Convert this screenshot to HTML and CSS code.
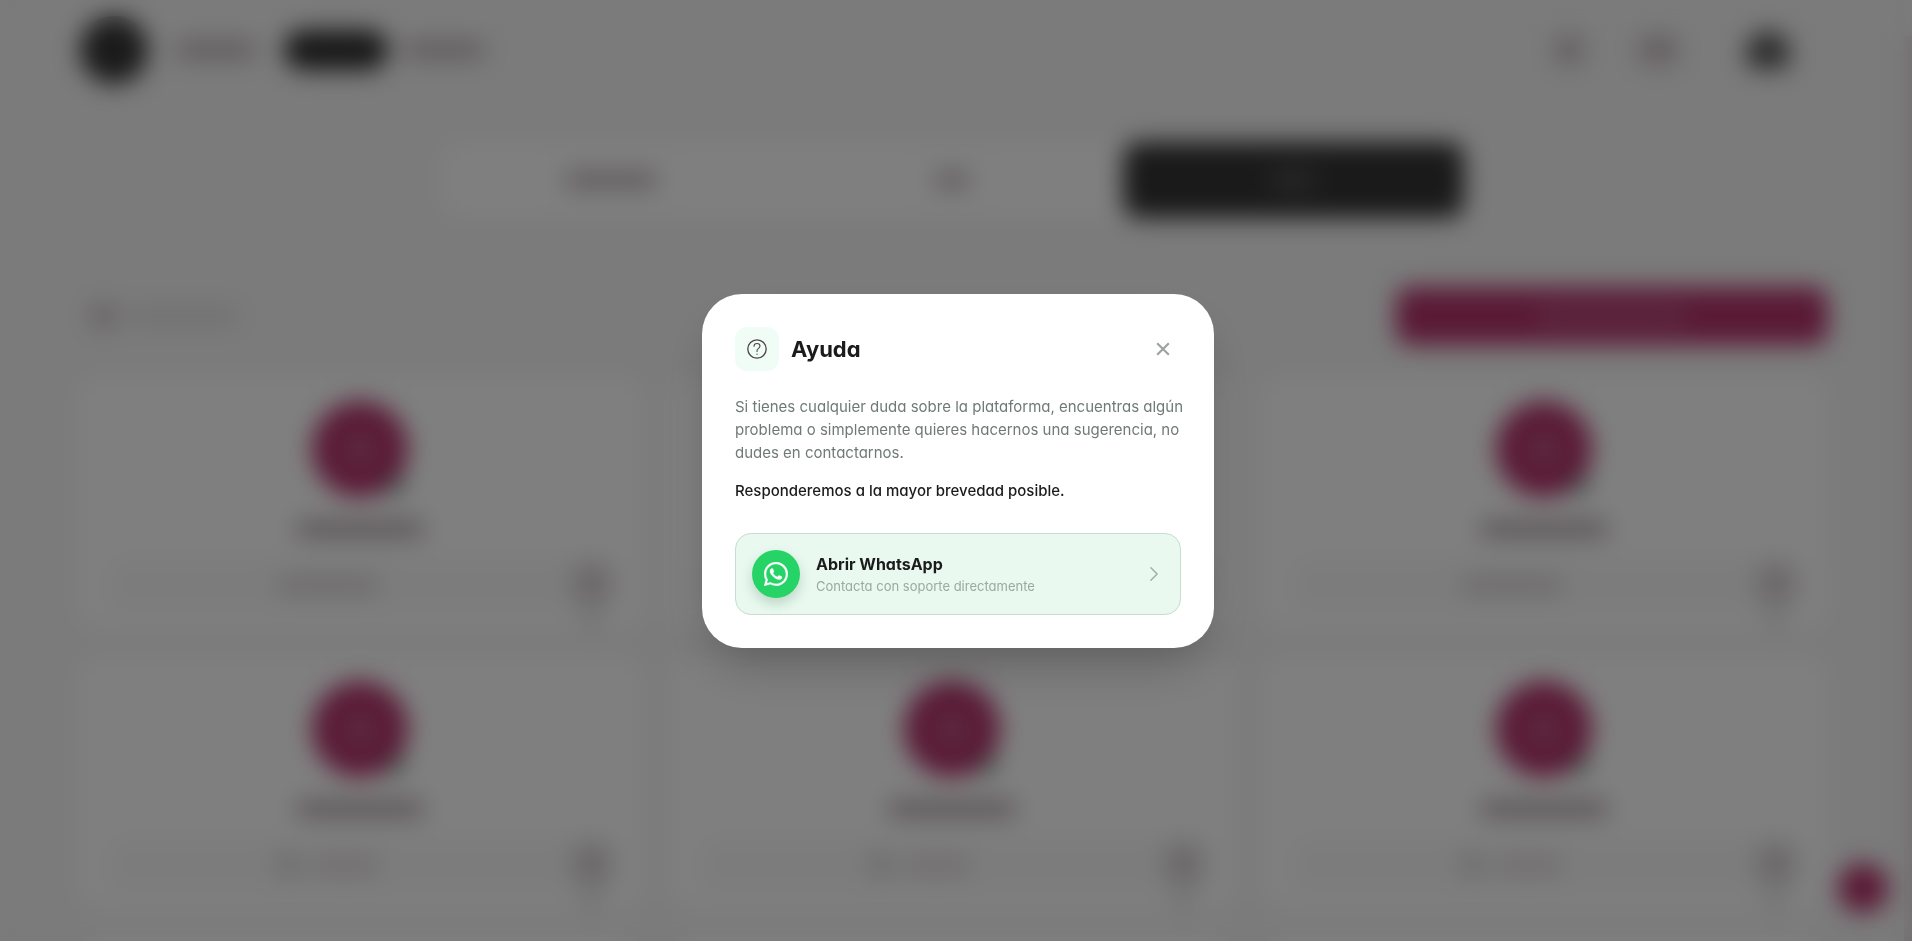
FILE: index.html
```html
<!DOCTYPE html>
<html lang="es">
  <head>
    <meta charset="UTF-8" />
    <meta name="viewport" content="width=device-width, initial-scale=1.0" />
    <title>Ayuda</title>
    <link rel="stylesheet" href="styles.css" />
  </head>
  <body>
    <!-- Page behind the dialog -->
    <div class="page" inert>
      <header class="topbar">
        <span class="logo"></span>
        <nav class="nav">
          <span class="bar nav-item"></span>
          <span class="nav-active"></span>
          <span class="bar nav-item"></span>
        </nav>
        <div class="tools">
          <span class="tool tool-small"></span>
          <span class="tool tool-wide"></span>
          <span class="user"></span>
        </div>
      </header>

      <main class="content">
        <div class="tabs">
          <div class="tab"><span class="bar tab-wide"></span></div>
          <div class="tab"><span class="bar tab-short"></span></div>
          <div class="tab tab-active"><span class="bar tab-label"></span></div>
        </div>

        <div class="actions">
          <div class="filter">
            <span class="filter-icon"></span>
            <span class="bar filter-label"></span>
          </div>
          <div class="add"><span class="bar add-label"></span></div>
        </div>

        <div class="cards">
          <div class="card">
            <span class="avatar"></span>
            <span class="bar name"></span>
            <div class="info">
              <span class="bar info-label"></span>
              <span class="pin"></span>
            </div>
          </div>
          <div class="card">
            <span class="avatar"></span>
            <span class="bar name"></span>
            <div class="info">
              <span class="bar info-label"></span>
              <span class="pin"></span>
            </div>
          </div>
          <div class="card">
            <span class="avatar"></span>
            <span class="bar name"></span>
            <div class="info">
              <span class="bar info-label"></span>
              <span class="pin"></span>
            </div>
          </div>
          <div class="card">
            <span class="avatar"></span>
            <span class="bar name"></span>
            <div class="info">
              <span class="dot"></span>
              <span class="bar info-short"></span>
              <span class="pin"></span>
            </div>
          </div>
          <div class="card">
            <span class="avatar"></span>
            <span class="bar name"></span>
            <div class="info">
              <span class="dot"></span>
              <span class="bar info-short"></span>
              <span class="pin"></span>
            </div>
          </div>
          <div class="card">
            <span class="avatar"></span>
            <span class="bar name"></span>
            <div class="info">
              <span class="dot"></span>
              <span class="bar info-short"></span>
              <span class="pin"></span>
            </div>
          </div>
          <div class="card"></div>
          <div class="card"></div>
          <div class="card"></div>
        </div>
      </main>
      <span class="scroll-track"></span>
      <span class="fab"></span>
    </div>

    <!-- Help dialog -->
    <div class="overlay">
      <div class="modal" role="dialog" aria-modal="true" aria-labelledby="help-title">
        <div class="modal-header">
          <span class="modal-icon">
            <svg width="24" height="24" viewBox="0 0 24 24" fill="none" stroke="currentColor" stroke-width="1.3" stroke-linecap="round" stroke-linejoin="round">
              <circle cx="12" cy="12" r="9.2" />
              <path d="M9 9.300C9 7.600 10.300 6.500 12 6.500s3 1.100 3 2.600c0 1.300-.8 1.900-1.700 2.500-.9.600-1.300 1.200-1.300 2.200v.6" stroke-width="1.100" />
              <path d="M12 17.100v.1" />
            </svg>
          </span>
          <h2 class="modal-title" id="help-title">Ayuda</h2>
          <button class="close" type="button" aria-label="Cerrar">
            <svg width="20" height="20" viewBox="0 0 24 24" fill="none" stroke="currentColor" stroke-width="2.600">
              <path d="M5 5l14 14M19 5L5 19" />
            </svg>
          </button>
        </div>

        <p class="text">
          Si tienes cualquier duda sobre la plataforma, encuentras algún
          problema o simplemente quieres hacernos una sugerencia, no dudes en
          contactarnos.
        </p>
        <p class="text text-strong">Responderemos a la mayor brevedad posible.</p>

        <a class="whatsapp" href="#">
          <span class="whatsapp-icon">
            <svg width="24" height="24" viewBox="0 0 16 16" fill="currentColor" stroke="currentColor" stroke-width="0.150">
              <path d="M13.601 2.326A7.850 7.850 0 0 0 7.994 0C3.627 0 .068 3.558.064 7.926c0 1.399.366 2.760 1.057 3.965L0 16l4.204-1.102a7.900 7.900 0 0 0 3.790.965h.004c4.368 0 7.926-3.558 7.930-7.930A7.900 7.900 0 0 0 13.600 2.326zM7.994 14.521a6.600 6.600 0 0 1-3.356-.920l-.240-.144-2.494.654.666-2.433-.156-.251a6.560 6.560 0 0 1-1.007-3.505c0-3.626 2.957-6.584 6.591-6.584a6.560 6.560 0 0 1 4.660 1.931 6.560 6.560 0 0 1 1.928 4.660c-.004 3.639-2.961 6.592-6.592 6.592m3.615-4.934c-.197-.099-1.170-.578-1.353-.646-.182-.065-.315-.099-.445.099-.133.197-.513.646-.627.775-.114.133-.232.148-.430.050-.197-.100-.836-.308-1.592-.985-.590-.525-.985-1.175-1.103-1.372-.114-.198-.011-.304.088-.403.087-.088.197-.232.296-.346.100-.114.133-.198.198-.330.065-.134.034-.248-.015-.347-.050-.099-.445-1.076-.612-1.470-.160-.389-.323-.335-.445-.340-.114-.007-.247-.007-.380-.007a.730.730 0 0 0-.529.247c-.182.198-.691.677-.691 1.654s.710 1.916.810 2.049c.098.133 1.394 2.132 3.383 2.992.470.205.840.326 1.129.418.475.152.904.129 1.246.080.380-.058 1.171-.480 1.338-.943.164-.464.164-.860.114-.992-.049-.133-.182-.198-.380-.297" />
            </svg>
          </span>
          <span class="whatsapp-body">
            <span class="whatsapp-title">Abrir WhatsApp</span>
            <span class="whatsapp-sub">Contacta con soporte directamente</span>
          </span>
          <svg class="chevron" width="20" height="20" viewBox="0 0 24 24" fill="none" stroke="currentColor" stroke-width="1.500" stroke-linecap="round" stroke-linejoin="round">
            <path d="M8.250 4.500l7.500 7.500-7.500 7.500" />
          </svg>
        </a>
      </div>
    </div>
  </body>
</html>
```
FILE: styles.css
```css
* {
  box-sizing: border-box;
}

body {
  margin: 0;
  font-family: Inter, "Open Sans", sans-serif;
  font-feature-settings: "cv11";
  color: #1b1b1b;
}

/* Page behind the dialog */
.page {
  position: relative;
  height: 100vh;
  overflow: hidden;
  padding: 0 84px 0 76px;
  background: #f6f6f6;
}

.bar {
  display: block;
  flex: none;
  height: 14px;
  border-radius: 7px;
  background: #b4a6aa;
}

.topbar {
  display: flex;
  align-items: center;
  height: 100px;
}

.logo {
  width: 68px;
  height: 68px;
  margin-left: 4px;
  border-radius: 50%;
  background: #363636;
}

.nav {
  display: flex;
  align-items: center;
  gap: 16px;
  margin-left: 28px;
}

.nav-item {
  width: 80px;
}

.nav-active {
  width: 104px;
  height: 40px;
  margin-left: 12px;
  border-radius: 20px;
  background: #303030;
}

.tools {
  display: flex;
  align-items: center;
  gap: 54px;
  margin-left: auto;
  padding-right: 38px;
}

.tool {
  height: 30px;
  border-radius: 12px;
  background: #cdc1c4;
}

.tool-small {
  width: 30px;
}

.tool-wide {
  width: 40px;
}

.user {
  width: 44px;
  height: 38px;
  margin-left: 14px;
  border-radius: 22px 22px 10px 10px;
  background: #5c5c5c;
}

.tabs {
  display: grid;
  grid-template-columns: repeat(3, 1fr);
  max-width: 1024px;
  height: 76px;
  margin: 42px auto 0;
  border-radius: 16px;
  background: #ffffff;
}

.tab {
  display: flex;
  align-items: center;
  justify-content: center;
}

.tab-active {
  border-radius: 16px;
  background: #343434;
}

.tab-wide {
  width: 92px;
}

.tab-short {
  width: 34px;
}

.tab-label {
  width: 48px;
  background: #5c5c5c;
}

.actions {
  display: flex;
  align-items: center;
  justify-content: space-between;
  margin: 69px 0 30px;
}

.filter {
  display: flex;
  align-items: center;
  gap: 12px;
  padding-left: 16px;
}

.filter-icon {
  width: 24px;
  height: 24px;
  border-radius: 8px;
  background: #cdc1c4;
}

.filter-label {
  width: 110px;
  background: #e2dcde;
}

.add {
  display: flex;
  align-items: center;
  justify-content: center;
  width: 432px;
  height: 58px;
  border-radius: 14px;
  background: #b4346c;
}

.add-label {
  width: 150px;
  background: #bf6088;
}

.cards {
  display: grid;
  grid-template-columns: repeat(3, 1fr);
  gap: 24px;
}

.card {
  display: flex;
  flex-direction: column;
  align-items: center;
  height: 256px;
  padding: 26px 32px 0;
  border-radius: 24px;
  background: #ffffff;
}

.avatar {
  position: relative;
  flex: none;
  width: 96px;
  height: 96px;
  border-radius: 50%;
  background: radial-gradient(circle, #c2799a 0, #b4346c 20px);
}

/* status dot on the avatar */
.avatar::after {
  content: "";
  position: absolute;
  right: 4px;
  bottom: 4px;
  width: 16px;
  height: 16px;
  border-radius: 50%;
  background: #6c9f88;
}

.name {
  width: 128px;
  height: 16px;
  margin-top: 24px;
}

.info {
  position: relative;
  display: flex;
  align-items: center;
  justify-content: center;
  gap: 12px;
  align-self: stretch;
  flex: none;
  height: 56px;
  margin-top: 20px;
  padding-right: 64px;
  border-radius: 16px;
  background: #f9f9f9;
}

.dot {
  width: 20px;
  height: 20px;
  border-radius: 50%;
  background: #d0c4c8;
}

.info-label {
  width: 100px;
  background: #d6cccf;
}

.info-short {
  width: 68px;
  background: #dcd3d6;
}

.pin {
  position: absolute;
  right: 0;
  top: 6px;
  width: 40px;
  height: 40px;
  border-radius: 50%;
  background: #d8cfd2;
}

.pin::after {
  content: "";
  position: absolute;
  top: 34px;
  left: 0;
  width: 40px;
  height: 42px;
  background: #e8e8e8;
  clip-path: polygon(0 0, 100% 0, 50% 100%);
}

.scroll-track {
  position: absolute;
  top: 36px;
  right: 0;
  bottom: 0;
  width: 8px;
  background: #e8e0e2;
}

.fab {
  position: absolute;
  right: 24px;
  bottom: 28px;
  width: 50px;
  height: 50px;
  border-radius: 50%;
  background: #b4346c;
}

/* Help dialog */
.overlay {
  position: fixed;
  inset: 0;
  display: flex;
  align-items: center;
  justify-content: center;
  padding: 16px 16px 16px 20px;
  background: rgba(0, 0, 0, 0.5);
  backdrop-filter: blur(12px);
}

.modal {
  width: 100%;
  max-width: 512px;
  padding: 33px;
  border-radius: 40px;
  background: #ffffff;
  box-shadow: 0 25px 50px -12px rgba(0, 0, 0, 0.25);
}

.modal-header {
  display: flex;
  align-items: center;
  gap: 12px;
  margin-bottom: 24px;
}

.modal-icon {
  display: flex;
  align-items: center;
  justify-content: center;
  width: 44px;
  height: 44px;
  border-radius: 12px;
  background: #f0fdf6;
  color: #4f4246;
}

.modal-title {
  margin: 0;
  font-size: 22px;
  line-height: 28px;
  font-weight: 700;
}

.close {
  display: flex;
  align-items: center;
  justify-content: center;
  width: 36px;
  height: 36px;
  margin-left: auto;
  padding: 0;
  border: none;
  border-radius: 50%;
  background: none;
  color: #9ca3a0;
  cursor: pointer;
}

.text {
  margin: 0 -8px 15px 0;
  font-size: 15px;
  line-height: 23px;
  color: #6f7a75;
}

.text-strong {
  margin-bottom: 31px;
  font-weight: 500;
  color: #1b1b1b;
}

.whatsapp {
  display: flex;
  align-items: center;
  gap: 16px;
  padding: 16px;
  border: 1px solid #c6ddcf;
  border-radius: 16px;
  background: #e9f9ef;
  color: #1b1b1b;
  text-decoration: none;
}

.whatsapp-icon {
  display: flex;
  align-items: center;
  justify-content: center;
  width: 48px;
  height: 48px;
  border-radius: 50%;
  background: #25d366;
  box-shadow: 0 6px 12px rgba(60, 110, 80, 0.25);
  color: #ffffff;
}

.whatsapp-body {
  display: flex;
  flex: 1;
  flex-direction: column;
}

.whatsapp-title {
  font-size: 16px;
  line-height: 24px;
  font-weight: 700;
}

.whatsapp-sub {
  font-size: 13px;
  line-height: 20px;
  color: #9ca8a2;
}

.chevron {
  color: #9ca8a2;
}
```
